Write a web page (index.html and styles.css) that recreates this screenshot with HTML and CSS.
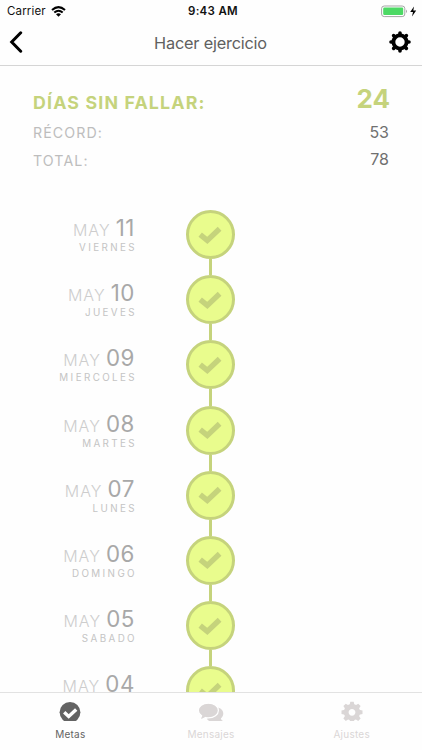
FILE: index.html
```
<!DOCTYPE html>
<html lang="es">
<head>
    <meta charset="UTF-8">
    <meta name="viewport" content="width=device-width, initial-scale=1.0">
    <title>Hacer ejercicio</title>
    <link rel="stylesheet" href="styles.css">
</head>
<body>
    <!-- Shared icon shapes -->
    <svg class="defs">
        <symbol id="check" viewBox="0 0 24 18">
            <path d="M2.2 8.6 L9.3 14.4 L21.6 2.8" fill="none" stroke="currentColor" stroke-width="5.4"/>
        </symbol>
    </svg>

    <div class="status-bar">
        <div class="carrier">
            <span>Carrier</span>
            <svg width="15" height="11" viewBox="0 0 15 11">
                <g fill="none" stroke="#000" stroke-width="2">
                    <path d="M1 4.1 Q7.5 -1.9 14 4.1"/>
                    <path d="M3.3 6.6 Q7.5 2.8 11.7 6.6"/>
                </g>
                <path d="M5 8.2 Q7.5 6.2 10 8.2 L7.5 10.7 Z"/>
            </svg>
        </div>
        <div class="time">9:43 AM</div>
        <div class="battery">
            <svg width="36" height="13" viewBox="0 0 36 13">
                <rect x="0.6" y="1" width="23.2" height="10.6" rx="2.6" fill="#fff" stroke="#a5a5a5"/>
                <rect x="2.2" y="2.6" width="20" height="7.4" rx="1.2" fill="#4cd964"/>
                <path d="M25 4.5 Q27 6.3 25 8.1 Z" fill="#a5a5a5"/>
                <path d="M33 1.4 L29.2 7 L32 7 L31 11.4 L35.2 5.4 L32.3 5.4 Z"/>
            </svg>
        </div>
    </div>

    <header class="navbar">
        <svg width="14" height="22" viewBox="0 0 14 22">
            <path d="M11.7 1.8 L2.7 11 L11.7 20.2" fill="none" stroke="#000" stroke-width="3" stroke-linecap="round" stroke-linejoin="miter"/>
        </svg>
        <h1>Hacer ejercicio</h1>
        <svg width="22" height="22" viewBox="-11 -11 22 22">
            <circle r="6.6" fill="none" stroke="#000" stroke-width="3.8"/>
            <g stroke="#000" stroke-width="3.6" stroke-linecap="round">
                <path d="M0 -9 V-7 M0 9 V7 M-9 0 H-7 M9 0 H7"/>
                <path d="M0 -9 V-7 M0 9 V7 M-9 0 H-7 M9 0 H7" transform="rotate(45)"/>
            </g>
        </svg>
    </header>

    <main class="content">
        <section class="stats">
            <div class="stat current"><span>DÍAS SIN FALLAR:</span><b>24</b></div>
            <div class="stat"><span>RÉCORD:</span><b>53</b></div>
            <div class="stat"><span>TOTAL:</span><b>78</b></div>
        </section>

        <section class="timeline">
            <div class="day">
                <div class="date"><p><span>MAY</span> 11</p><small>VIERNES</small></div>
                <div class="track"><div class="dot"><svg><use href="#check"/></svg></div></div>
            </div>
            <div class="day">
                <div class="date"><p><span>MAY</span> 10</p><small>JUEVES</small></div>
                <div class="track"><div class="dot"><svg><use href="#check"/></svg></div></div>
            </div>
            <div class="day">
                <div class="date"><p><span>MAY</span> 09</p><small>MIERCOLES</small></div>
                <div class="track"><div class="dot"><svg><use href="#check"/></svg></div></div>
            </div>
            <div class="day">
                <div class="date"><p><span>MAY</span> 08</p><small>MARTES</small></div>
                <div class="track"><div class="dot"><svg><use href="#check"/></svg></div></div>
            </div>
            <div class="day">
                <div class="date"><p><span>MAY</span> 07</p><small>LUNES</small></div>
                <div class="track"><div class="dot"><svg><use href="#check"/></svg></div></div>
            </div>
            <div class="day">
                <div class="date"><p><span>MAY</span> 06</p><small>DOMINGO</small></div>
                <div class="track"><div class="dot"><svg><use href="#check"/></svg></div></div>
            </div>
            <div class="day">
                <div class="date"><p><span>MAY</span> 05</p><small>SABADO</small></div>
                <div class="track"><div class="dot"><svg><use href="#check"/></svg></div></div>
            </div>
            <div class="day">
                <div class="date"><p><span>MAY</span> 04</p></div>
                <div class="track"><div class="dot"><svg><use href="#check"/></svg></div></div>
            </div>
        </section>
    </main>

    <nav class="tabs">
        <div class="tab active">
            <svg width="26" height="20" viewBox="0 0 26 20">
                <circle cx="13" cy="11.3" r="10.4" fill="currentColor"/>
                <path d="M7.2 11.2 L11.7 15.4 L19.2 8.4" fill="none" stroke="#fff" stroke-width="3.4"/>
            </svg>
            <span>Metas</span>
        </div>
        <div class="tab">
            <svg width="26" height="20" viewBox="0 0 26 20">
                <path d="M15 6.5 C21 5.5 25.3 8.5 25.3 12.5 C25.3 14.6 24.3 16.2 22.8 17.4 Q23.3 19 25 20 L24 21 L11 20 Q10 18.7 9 18.3 Z" fill="currentColor"/>
                <path d="M10.3 2.2 C16 2.2 20.4 5.3 20.4 9.5 S16 16.8 10.3 16.8 Q9 16.8 7.5 16.5 Q4.8 18.5 1.2 18.6 Q3 17 3.6 14.8 C1.6 13.4 0.3 11.6 0.3 9.5 C0.3 5.3 4.8 2.2 10.3 2.2 Z" fill="currentColor" stroke="#fff" stroke-width="1.2"/>
            </svg>
            <span>Mensajes</span>
        </div>
        <div class="tab">
            <svg width="26" height="20" viewBox="0 0 26 20">
                <g transform="translate(13 11.3)">
                    <circle r="5.8" fill="none" stroke="currentColor" stroke-width="4.8"/>
                    <g fill="currentColor">
                        <path id="teeth" d="M-2.5 -7 L-1.7 -10.5 H1.7 L2.5 -7 Z M-2.5 7 L-1.7 10.5 H1.7 L2.5 7 Z M-7 -2.5 L-10.5 -1.7 V1.7 L-7 2.5 Z M7 -2.5 L10.5 -1.7 V1.7 L7 2.5 Z"/>
                        <use href="#teeth" transform="rotate(45)"/>
                    </g>
                </g>
            </svg>
            <span>Ajustes</span>
        </div>
    </nav>
</body>
</html>
```

FILE: styles.css
```
* {
    box-sizing: border-box;
}
body {
    font-family: Inter, "Liberation Sans", sans-serif;
    margin: 0;
    height: 750px;
    display: flex;
    flex-direction: column;
    overflow: hidden;
    background: #fefefe;
}
svg {
    display: block;
    flex: none;
}
p, h1 {
    margin: 0;
}
.defs {
    display: none;
}
.status-bar {
    height: 21px;
    padding: 1px 5px 0 7px;
    display: grid;
    grid-template-columns: 1fr auto 1fr;
    align-items: center;
    font-size: 11.5px;
    color: #111;
}
.carrier {
    display: flex;
    align-items: center;
    gap: 5px;
    letter-spacing: 0.15px;
}
.time {
    padding-left: 2px;
    font-weight: 600;
    letter-spacing: 0.3px;
}
.battery {
    display: flex;
    justify-content: flex-end;
}
.navbar {
    height: 45px;
    padding: 0 11px 2px 9px;
    display: flex;
    align-items: center;
    justify-content: space-between;
    border-bottom: 1px solid #d5d5d5;
}
.navbar h1 {
    padding: 1px 0 0 9px;
    font-size: 16.3px;
    font-weight: 400;
    letter-spacing: -0.2px;
    color: #606060;
}
.content {
    flex: 1;
    min-height: 0;
    overflow: hidden;
}
.stats {
    height: 144px;
    padding: 17px 33px 0;
}
.stat {
    height: 27.5px;
    display: flex;
    align-items: center;
    justify-content: space-between;
    font-size: 14.2px;
    letter-spacing: 1.1px;
    color: #bdbdbd;
}
.stat b {
    padding-bottom: 2px;
    font-size: 16px;
    font-weight: 400;
    letter-spacing: 0;
    color: #707070;
}
.stat.current {
    height: 36px;
    font-size: 17.8px;
    font-weight: 700;
    letter-spacing: 1.15px;
    color: #c5d37c;
}
.stat.current span {
    padding-top: 2px;
}
.stat.current b {
    padding-bottom: 6px;
    margin-right: -1px;
    font-size: 26px;
    font-weight: 700;
    color: #c5d37c;
}
.day {
    height: 65.2px;
    display: flex;
}
.date {
    width: 135px;
    padding-top: 5px;
    text-align: right;
}
.date p {
    font-size: 22.3px;
    line-height: 26px;
    letter-spacing: 0.6px;
    word-spacing: -1.8px;
    color: #a8a8a8;
}
.date span {
    font-size: 16px;
    font-weight: 300;
    letter-spacing: 1px;
    color: #cdcdcd;
}
.date small {
    display: block;
    margin: -1px -2px 0 0;
    font-size: 9.8px;
    line-height: 12px;
    letter-spacing: 2.4px;
    color: #c4c4c4;
}
.track {
    margin-left: 50.5px;
    display: flex;
    flex-direction: column;
    align-items: center;
}
/* Line down to the next day */
.track::after {
    content: "";
    flex: 1;
    width: 3px;
    background: #c5d37c;
}
.dot {
    width: 49px;
    height: 49px;
    display: flex;
    align-items: center;
    justify-content: center;
    border: 3px solid #c5d37c;
    border-radius: 50%;
    background: #e9fc8d;
    color: #c5d37c;
}
.dot svg {
    width: 24px;
    height: 18px;
}
.tabs {
    height: 58px;
    padding-top: 8px;
    display: flex;
    border-top: 1px solid #e2e2e2;
}
.tab {
    flex: 1;
    display: flex;
    flex-direction: column;
    align-items: center;
    gap: 7px;
    font-size: 10px;
    line-height: 13px;
    letter-spacing: 0.25px;
    color: #dad6d6;
}
.tab.active {
    color: #636363;
}
```
